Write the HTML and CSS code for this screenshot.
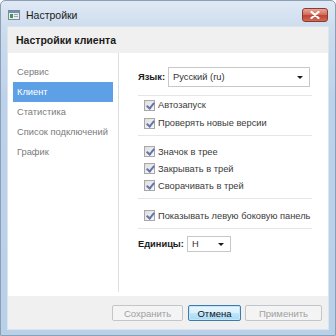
FILE: index.html
```html
<!DOCTYPE html>
<html>
<head>
<meta charset="utf-8">
<link rel="stylesheet" href="styles.css">
</head>
<body>
<div class="window">
  <div class="titlebar">
    <svg class="appicon" width="12" height="10" viewBox="0 0 12 10">
      <rect x="0.5" y="0.5" width="11" height="9" fill="#e9edf2" stroke="#7d8894"/>
      <rect x="1" y="1" width="10" height="2" fill="#6f8fb8"/>
      <rect x="2" y="4" width="3" height="4" fill="#3f9a4a"/>
      <rect x="6" y="4" width="4" height="1" fill="#9aa6b3"/>
      <rect x="6" y="6" width="4" height="1" fill="#9aa6b3"/>
    </svg>
    <span class="title">Настройки</span>
    <div class="close">
      <svg width="10" height="8" viewBox="0 0 10 8">
        <path d="M1.5 1 L8.5 7 M8.5 1 L1.5 7" stroke="#fff" stroke-width="2.2" stroke-linecap="round"/>
      </svg>
    </div>
  </div>
  <div class="client">
    <div class="header">Настройки клиента</div>
    <div class="content">
      <ul class="sidebar">
        <li class="item">Сервис</li>
        <li class="item selected">Клиент</li>
        <li class="item">Статистика</li>
        <li class="item">Список подключений</li>
        <li class="item">График</li>
      </ul>
      <div class="main">
        <div class="row-field lang">
          <span class="label">Язык:</span>
          <div class="select wide"><span>Русский (ru)</span><span class="arrow"></span></div>
        </div>
        <div class="sep s1"></div>
        <div class="group g1">
          <label class="check"><span class="box"></span>Автозапуск</label>
          <label class="check"><span class="box"></span>Проверять новые версии</label>
        </div>
        <div class="sep s2"></div>
        <div class="group g2">
          <label class="check"><span class="box"></span>Значок в трее</label>
          <label class="check"><span class="box"></span>Закрывать в трей</label>
          <label class="check"><span class="box"></span>Сворачивать в трей</label>
        </div>
        <div class="sep s3"></div>
        <div class="group g3">
          <label class="check"><span class="box"></span>Показывать левую боковую панель</label>
        </div>
        <div class="sep s4"></div>
        <div class="row-field units">
          <span class="label">Единицы:</span>
          <div class="select narrow"><span>Н</span><span class="arrow"></span></div>
        </div>
      </div>
    </div>
    <div class="footer">
      <button class="btn disabled b-save">Сохранить</button>
      <button class="btn focused b-cancel">Отмена</button>
      <button class="btn disabled b-apply">Применить</button>
    </div>
  </div>
</div>
</body>
</html>
```
FILE: styles.css
```css
* { box-sizing: border-box; }
html, body { margin: 0; padding: 0; }
body {
  width: 336px;
  height: 336px;
  overflow: hidden;
  font-family: "Liberation Sans", Arial, sans-serif;
  font-size: 9.3px;
  color: #333;
}
.window {
  width: 336px;
  height: 336px;
  display: flex;
  flex-direction: column;
  border: 1px solid #8d9fb4;
  border-radius: 5px 5px 0 0;
  background: linear-gradient(to bottom, #dfe9f4 0px, #cddcee 26px, #bcd2ea 100px, #b9d0e9 100%);
}
.titlebar {
  height: 25px;
  flex: none;
  display: flex;
  align-items: center;
  padding: 2px 7px 0 7px;
}
.appicon { flex: none; margin-right: 6px; }
.title {
  font-size: 10.5px;
  color: #1b1b1b;
}
.close {
  margin-left: auto;
  width: 26px;
  height: 14px;
  border: 1px solid #8b3a32;
  border-radius: 3px;
  background: linear-gradient(to bottom, #e6a69a 0%, #d4705f 45%, #c2432f 55%, #cf6b55 100%);
  display: flex;
  align-items: center;
  justify-content: center;
}
.close svg { display: block; }
.client {
  flex: 1;
  margin: 0 6px 5px 6px;
  border: 1px solid #dbe5ef;
  display: flex;
  flex-direction: column;
  background: #f0f0f0;
}
.header {
  height: 26px;
  flex: none;
  display: flex;
  align-items: center;
  padding-left: 8px;
  font-weight: bold;
  font-size: 10.5px;
  color: #1b1b1b;
  background: #f0f0f0;
}
.content {
  height: 243px;
  flex: none;
  display: flex;
  background: #fff;
}
.sidebar {
  list-style: none;
  margin: 0;
  padding: 9px 0 0 0;
  width: 111px;
  flex: none;
  border-right: 1px solid #dedede;
  margin-bottom: 4px;
}
.item {
  height: 20px;
  line-height: 20px;
  margin: 0 5px 0 5px;
  padding-left: 4px;
  color: #7a7a7a;
  white-space: nowrap;
}
.item.selected {
  background: #5ea0e6;
  color: #fff;
}
.main {
  flex: 1;
  padding: 14px 16px 0 19px;
  display: flex;
  flex-direction: column;
}
.row-field {
  display: flex;
  align-items: center;
}
.label {
  font-weight: bold;
  color: #1b1b1b;
  margin-right: 3px;
}
.lang { height: 20px; }
.select {
  height: 100%;
  border: 1px solid #c8c8c8;
  background: #fff;
  display: flex;
  align-items: center;
  padding: 0 6px 0 4px;
  color: #333;
}
.select .arrow {
  margin-left: auto;
  width: 0;
  height: 0;
  border-left: 3px solid transparent;
  border-right: 3px solid transparent;
  border-top: 3px solid #1b1b1b;
}
.wide { width: 142px; }
.units { height: 16px; margin-top: 7px; }
.narrow { width: 44px; }
.sep {
  height: 1px;
  background: #e6e6e6;
  flex: none;
}
.s1 { margin-top: 8px; }
.s2 { margin-top: 3px; }
.s3 { margin-top: 4px; }
.s4 { margin-top: 4px; }
.group { display: flex; flex-direction: column; }
.g1 .check { height: 18px; }
.g2 { margin-top: 7px; }
.g3 { margin-top: 8px; }
.check {
  height: 17px;
  display: flex;
  align-items: center;
  padding-left: 6px;
  color: #3a3a3a;
  white-space: nowrap;
}
.box {
  width: 11px;
  height: 11px;
  flex: none;
  margin-right: 3px;
  border: 1px solid #a8a8a8;
  background: linear-gradient(135deg, #dedede, #f8f8f8);
  position: relative;
}
.box::after {
  content: "";
  position: absolute;
  left: 3px;
  top: 0px;
  width: 3px;
  height: 6px;
  border-right: 2px solid #6475aa;
  border-bottom: 2px solid #6475aa;
  transform: rotate(40deg);
}
.footer {
  flex: 1;
  display: flex;
  justify-content: flex-end;
  align-items: flex-start;
  padding: 9px 6px 0 0;
  background: #f0f0f0;
}
.btn {
  height: 16px;
  font-family: "Liberation Sans", Arial, sans-serif;
  font-size: 9.5px;
  padding: 0;
  border-radius: 2px;
  margin-left: 4px;
}
.disabled {
  border: 1px solid #c2c6ca;
  background: #f4f4f4;
  color: #a0a0a0;
}
.focused {
  border: 1px solid #3d7bad;
  background: linear-gradient(to bottom, #eaf6fd 0%, #d9f0fc 50%, #bee6fd 51%, #a7d9f5 100%);
  color: #111;
  box-shadow: inset 0 0 0 1px #c5e6f8;
}
.b-save { width: 71px; }
.b-cancel { width: 53px; margin-left: 5px; }
.b-apply { width: 77px; }
```
